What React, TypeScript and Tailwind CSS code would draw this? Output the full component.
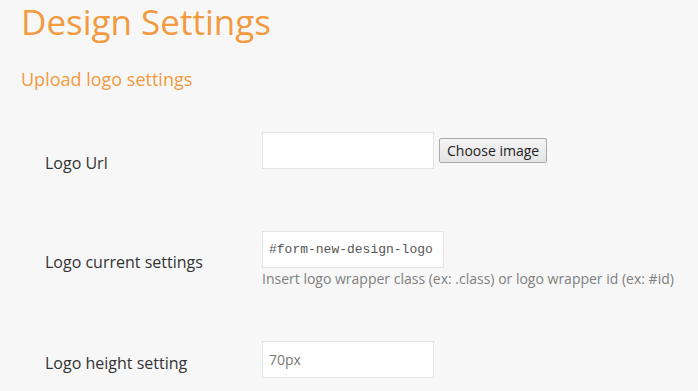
const labelCls = "w-[242px] shrink-0 pl-[25px] text-[16px] leading-[24px] text-[#333]";
const boxCls = "h-[37px] border border-[#e3e3e3] bg-white pl-[6px] outline-none";

export default function App() {
  return (
    <div className="flex min-h-screen flex-col bg-[#f7f7f7] pl-[20px] font-['Open_Sans',sans-serif]">
      {/* Page title */}
      <h1 className="-mt-[3px] ml-[1px] text-[35px] leading-[50px] font-normal text-[#f29a40]">
        Design Settings
      </h1>
      <h2 className="mt-[20px] ml-[1px] text-[18px] leading-[24px] font-normal text-[#f29a40]">
        Upload logo settings
      </h2>

      {/* Logo url */}
      <div className="mt-[29px] flex h-[100px] items-start">
        <div className={`${labelCls} pt-[31px]`}>Logo Url</div>
        <div className="flex items-center gap-[5px] pt-[12px]">
          <input type="text" className={`${boxCls} w-[172px] pr-[6px] text-[14px] text-[#666]`} />
          <button className="h-[25px] rounded-[2px] border border-[#a9a9a9] bg-gradient-to-b from-[#f4f4f4] to-[#e4e4e4] px-[7px] text-[14px] leading-[20px] text-[#222]">
            Choose image
          </button>
        </div>
      </div>

      {/* Current settings */}
      <div className="flex h-[110px] items-start">
        <div className={`${labelCls} pt-[30px]`}>Logo current settings</div>
        <div className="pt-[11px]">
          <input
            type="text"
            defaultValue="#form-new-design-logo"
            className={`${boxCls} w-[182px] pr-[4px] font-['Liberation_Mono',monospace] text-[13px] text-[#555]`}
          />
          <p className="mt-[1px] text-[14px] leading-[20px] text-[#808080]">
            Insert logo wrapper class (ex: .class) or logo wrapper id (ex: #id)
          </p>
        </div>
      </div>

      {/* Height */}
      <div className="flex items-start">
        <div className={`${labelCls} pt-[21px]`}>Logo height setting</div>
        <div className="pt-[11px]">
          <input
            type="text"
            placeholder="70px"
            className={`${boxCls} w-[172px] pr-[6px] text-[14px] text-[#666] placeholder:text-[#777]`}
          />
        </div>
      </div>
    </div>
  );
}
